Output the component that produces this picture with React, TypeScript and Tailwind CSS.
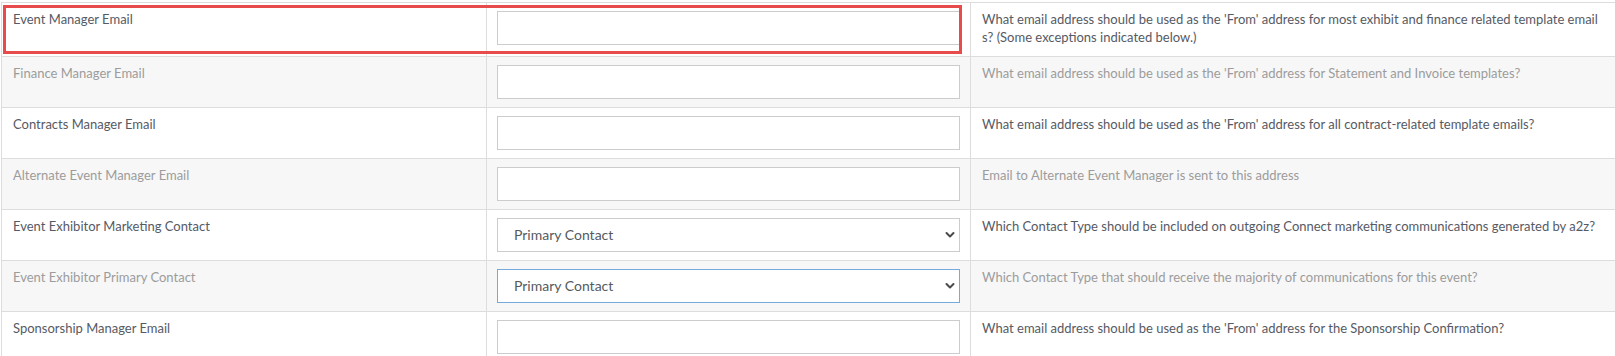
import React from "react";

type Row = {
  label: string;
  desc: React.ReactNode;
  kind: "input" | "select";
  focused?: boolean;
};

const rows: Row[] = [
  {
    label: "Event Manager Email",
    desc: (
      <>
        <span className="whitespace-nowrap">
          What email address should be used as the 'From' address for most exhibit and finance related template email
        </span>
        <br />
        <span className="whitespace-nowrap">s? (Some exceptions indicated below.)</span>
      </>
    ),
    kind: "input",
  },
  {
    label: "Finance Manager Email",
    desc: "What email address should be used as the 'From' address for Statement and Invoice templates?",
    kind: "input",
  },
  {
    label: "Contracts Manager Email",
    desc: "What email address should be used as the 'From' address for all contract-related template emails?",
    kind: "input",
  },
  {
    label: "Alternate Event Manager Email",
    desc: "Email to Alternate Event Manager is sent to this address",
    kind: "input",
  },
  {
    label: "Event Exhibitor Marketing Contact",
    desc: "Which Contact Type should be included on outgoing Connect marketing communications generated by a2z?",
    kind: "select",
  },
  {
    label: "Event Exhibitor Primary Contact",
    desc: "Which Contact Type that should receive the majority of communications for this event?",
    kind: "select",
    focused: true,
  },
  {
    label: "Sponsorship Manager Email",
    desc: "What email address should be used as the 'From' address for the Sponsorship Confirmation?",
    kind: "input",
  },
];

function Chevron() {
  return (
    <svg
      className="pointer-events-none absolute right-[5px] top-1/2 -translate-y-1/2"
      width="10"
      height="7"
      viewBox="0 0 10 7"
      fill="none"
    >
      <path d="M1.5 1.5 L5 5 L8.5 1.5" stroke="#4a4a4a" strokeWidth="2" strokeLinecap="round" strokeLinejoin="round" />
    </svg>
  );
}

function Field({ row }: { row: Row }) {
  if (row.kind === "select") {
    return (
      <div className="relative h-[34px] w-[463px]">
        <select
          defaultValue="primary"
          className={
            "h-full w-full appearance-none bg-white pb-[2px] pl-[16px] text-[14px] text-[#555a60] outline-none border " +
            (row.focused ? "border-[#74aadd]" : "border-[#cccccc]")
          }
        >
          <option value="primary">Primary Contact</option>
        </select>
        <Chevron />
      </div>
    );
  }
  return <input type="email" className="h-[34px] w-[463px] border border-[#cccccc] bg-white outline-none" />;
}

export default function App() {
  return (
    <div
      className="h-[356px] w-[1615px] overflow-hidden bg-white pl-[1px] pt-[2px]"
      style={{ fontFamily: "Lato, 'Open Sans', sans-serif" }}
    >
      <div className="border-l border-t border-[#dddddd]">
        {rows.map((row, i) => {
          const even = i % 2 === 1;
          const text = even ? "text-[#9c9c9c]" : "text-[#565a64]";
          return (
            <div
              key={row.label}
              className={
                "relative grid grid-cols-[485px_484px_1fr] border-b border-[#dddddd] " +
                (i === 0 ? "h-[54px] " : "h-[51px] ") +
                (even ? "bg-[#f7f7f7]" : "bg-white")
              }
            >
              <div className={"border-r border-[#dddddd] pl-[11px] pt-[7px] text-[13px] leading-[18px] " + text}>
                {row.label}
              </div>
              <div className="border-r border-[#dddddd] pl-[10px] pt-[8px]">
                <Field row={row} />
              </div>
              <div className={"pl-[11px] pt-[7px] text-[13px] leading-[18px] " + text}>{row.desc}</div>
              {i === 0 && (
                <div className="pointer-events-none absolute left-[1px] top-[2px] h-[49px] w-[959px] border-[3px] border-[#e84b4b]" />
              )}
            </div>
          );
        })}
      </div>
    </div>
  );
}
